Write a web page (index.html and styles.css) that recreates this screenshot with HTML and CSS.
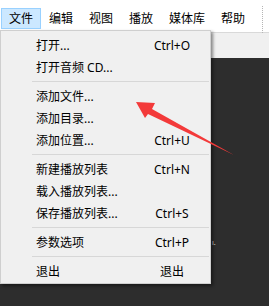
FILE: index.html
```html
<!DOCTYPE html>
<html lang="zh-CN">
<head>
    <meta charset="UTF-8">
    <meta name="viewport" content="width=device-width, initial-scale=1.0">
    <title>文件菜单</title>
    <link rel="stylesheet" href="styles.css">
</head>
<body>
    <div class="menubar">
        <span class="menu-title active">文件</span>
        <span class="menu-title">编辑</span>
        <span class="menu-title">视图</span>
        <span class="menu-title">播放</span>
        <span class="menu-title">媒体库</span>
        <span class="menu-title">帮助</span>
        <span class="grip"></span>
    </div>
    <div class="toolbar"></div>
    <div class="canvas">
        <span class="stray">ı.</span>
    </div>

    <!-- dropdown of the 文件 menu -->
    <div class="dropdown">
        <div class="item"><span class="label">打开...</span><span class="key">Ctrl+O</span></div>
        <div class="item"><span class="label">打开音频 CD...</span><span class="key"></span></div>
        <div class="sep"></div>
        <div class="item"><span class="label">添加文件...</span><span class="key"></span></div>
        <div class="item"><span class="label">添加目录...</span><span class="key"></span></div>
        <div class="item"><span class="label">添加位置...</span><span class="key">Ctrl+U</span></div>
        <div class="sep"></div>
        <div class="item"><span class="label">新建播放列表</span><span class="key">Ctrl+N</span></div>
        <div class="item"><span class="label">载入播放列表...</span><span class="key"></span></div>
        <div class="item"><span class="label">保存播放列表...</span><span class="key">Ctrl+S</span></div>
        <div class="sep"></div>
        <div class="item"><span class="label">参数选项</span><span class="key">Ctrl+P</span></div>
        <div class="sep"></div>
        <div class="item"><span class="label">退出</span><span class="key">退出</span></div>
    </div>

    <!-- red annotation arrow -->
    <svg class="arrow" width="269" height="306" viewBox="0 0 269 306">
        <polygon points="136,102 155,103 152,109 234,155 148,114 145,118" fill="#f33a3a"/>
    </svg>
</body>
</html>
```

FILE: styles.css
```css
body {
    margin: 0;
    width: 269px;
    height: 306px;
    display: flex;
    flex-direction: column;
    background-color: #2d2d2d;
    font-family: "Noto Sans", "Noto Sans CJK SC", sans-serif;
    font-size: 12px;
    color: #000;
    overflow: hidden;
    position: relative;
}
.menubar {
    display: flex;
    align-items: flex-start;
    height: 24px;
    padding: 8px 0 0 1px;
    background: #fff;
    border-bottom: 1px solid #d9d9d9;
    position: relative;
}
.menu-title {
    padding: 0 7px;
    height: 19px;
    line-height: 19px;
    border: 1px solid transparent;
}
.menu-title.active {
    background: #cce8ff;
    border-color: #99d1ff;
}
.grip {
    position: absolute;
    left: 262px;
    top: 6px;
    width: 1px;
    height: 27px;
    border-left: 1px dotted #b5b5b5;
}
.toolbar {
    height: 25px;
    background: #f0f0f0;
}
.canvas {
    flex: 1;
    position: relative;
}
.stray {
    position: absolute;
    left: 212px;
    top: 181px;
    color: #ddd;
    font-size: 7px;
    line-height: 7px;
}
.dropdown {
    position: absolute;
    left: 0;
    top: 30px;
    width: 209px;
    padding: 3px 0 1px;
    background: #f0f0f0;
    border: 1px solid #cfcfcf;
    box-shadow: 2px 2px 3px rgba(0, 0, 0, 0.45);
}
.item {
    display: flex;
    align-items: center;
    height: 22px;
    padding: 0 8px 0 35px;
}
.label {
    flex: 1;
    white-space: nowrap;
}
.key {
    width: 60px;
    text-align: center;
    white-space: nowrap;
}
.sep {
    height: 1px;
    margin: 3px 1px 3px 31px;
    background: #d7d7d7;
}
.arrow {
    position: absolute;
    left: 0;
    top: 0;
    pointer-events: none;
}
```
